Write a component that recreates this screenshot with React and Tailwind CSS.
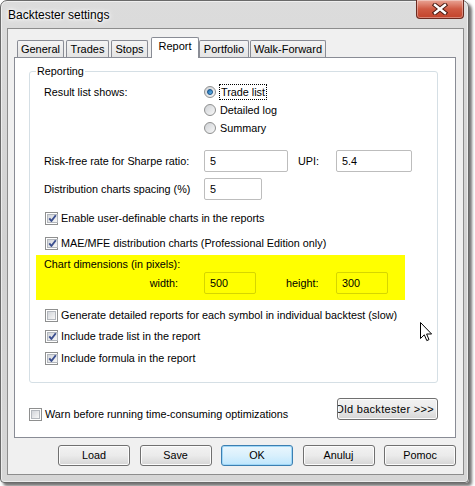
import React from "react";

function Check({ checked }) {
  return (
    <span className="w-[13px] h-[13px] shrink-0 border border-[#8e8f8f] bg-white p-[1px] flex">
      <span className="flex-1 flex items-center justify-center border border-[#b3b7bd] bg-gradient-to-br from-[#d2d5da] to-[#f7f7f7]">
        {checked && (
          <svg width="9" height="9" viewBox="0 0 9 9">
            <path d="M1.3 4.3 L3.4 7 L7.8 1.2" fill="none" stroke="#3b4f8f" strokeWidth="1.9" strokeLinejoin="round" />
          </svg>
        )}
      </span>
    </span>
  );
}

function Radio({ checked }) {
  return (
    <span className="w-[12px] h-[12px] shrink-0 rounded-full border border-[#8e8f8f] bg-gradient-to-br from-[#cfd2d6] to-[#f8f8f8] flex items-center justify-center">
      {checked && (
        <span className="w-[6px] h-[6px] rounded-full border border-[#144f86] bg-gradient-to-br from-[#1d6ab0] to-[#6cc0f0]" />
      )}
    </span>
  );
}

function Input({ value, w, yellow }) {
  return (
    <div
      className={
        "h-[22px] rounded-[2px] border flex items-center pl-[5px] " +
        w +
        (yellow ? " border-[#d6d600] bg-[#ffff00]" : " border-[#bdbdbd] bg-white")
      }
    >
      {value}
    </div>
  );
}

function CheckRow({ checked, children, className }) {
  return (
    <div className={"h-[18px] flex items-center pl-[15px] gap-[3px] " + (className || "")}>
      <Check checked={checked} />
      <span className="whitespace-nowrap">{children}</span>
    </div>
  );
}

function Tab({ label, w, ml, selected }) {
  return selected ? (
    <div
      className={
        "h-[21px] -mb-[1px] relative z-10 bg-white border border-b-0 border-[#898c95] rounded-t-[2px] flex items-start justify-center pt-[3px] " +
        w +
        " " +
        ml
      }
    >
      {label}
    </div>
  ) : (
    <div
      className={
        "h-[17px] border border-b-0 border-[#898c95] rounded-t-[2px] bg-gradient-to-b from-[#f4f4f4] to-[#e4e4e4] flex items-center justify-center " +
        w +
        " " +
        ml
      }
    >
      {label}
    </div>
  );
}

function Btn({ children, def }) {
  return (
    <div
      className={
        "w-[72px] h-[21px] rounded-[3px] border flex items-center justify-center " +
        (def
          ? "border-[#3c7fb1] bg-gradient-to-b from-[#eaf6fd] via-[#d9f0fc] to-[#bee6fd] shadow-[inset_0_0_0_1px_#9fd7f7]"
          : "border-[#707070] bg-gradient-to-b from-[#f2f2f2] via-[#ebebeb] to-[#d5d5d5] shadow-[inset_0_0_0_1px_#fcfcfc]")
      }
    >
      {children}
    </div>
  );
}

export default function App() {
  return (
    <div className="w-[475px] h-[486px] bg-white relative overflow-hidden font-['Liberation_Sans',Arial,sans-serif] text-[10.8px] text-black leading-none">
      <div className="w-[469px] h-[483px] rounded-t-[7px] rounded-b-[4px] border border-[#6a6a6a] bg-gradient-to-b from-[#dcdcdc] via-[#d2d2d2] to-[#d6d6d6] shadow-[3px_3px_3px_rgba(0,0,0,0.55),inset_0_0_0_1px_rgba(255,255,255,0.55)] flex flex-col">
        {/* title bar */}
        <div className="h-[27px] flex items-start justify-between shrink-0">
          <div className="text-[12px] ml-[7px] mt-[8px] [text-shadow:0_0_8px_#fff,0_0_5px_#fff,0_0_3px_#fff]">
            Backtester settings
          </div>
          <div className="-mt-[1px] mr-[4px] w-[48px] h-[19px] rounded-b-[4px] border border-t-0 border-[#6b2a20] bg-gradient-to-b from-[#e9a596] via-[#cf5a43] to-[#c2432b] shadow-[inset_0_0_0_1px_rgba(255,255,255,0.35)] flex items-center justify-center">
            <svg width="16" height="12" viewBox="0 0 16 12">
              <path d="M3 2 L13 10 M13 2 L3 10" stroke="#4a1a12" strokeWidth="4.4" strokeLinecap="square" />
              <path d="M3 2 L13 10 M13 2 L3 10" stroke="#ffffff" strokeWidth="2.4" strokeLinecap="square" />
            </svg>
          </div>
        </div>

        {/* client area */}
        <div className="ml-[6px] w-[457px] h-[447px] border border-[#8d8d8d] bg-[#f0f0f0] flex flex-col pl-[6px] pt-[8px]">
          {/* tabs */}
          <div className="h-[20px] flex items-end text-[11px]">
            <Tab label="General" w="w-[47px]" ml="ml-[3px]" />
            <Tab label="Trades" w="w-[43px]" ml="ml-[2px]" />
            <Tab label="Stops" w="w-[37px]" ml="ml-[2px]" />
            <Tab label="Report" w="w-[48px]" ml="ml-[3px]" selected />
            <Tab label="Portfolio" w="w-[50px]" ml="ml-0" />
            <Tab label="Walk-Forward" w="w-[76px]" ml="ml-[1px]" />
          </div>

          {/* panel */}
          <div className="w-[442px] h-[381px] border border-[#898c95] bg-white flex flex-col">
            {/* group box */}
            <div className="relative ml-[14px] mt-[13px] w-[409px] h-[312px] border border-[#d5dfe5] rounded-[3px] flex flex-col pt-[11px]">
              <span className="absolute left-[6px] -top-[7px] bg-white px-[1px] leading-[13px]">Reporting</span>

              {/* radios */}
              <div className="flex pl-[14px]">
                <div className="w-[160px] h-[18px] flex items-center">Result list shows:</div>
                <div className="flex flex-col">
                  <div className="h-[18px] flex items-center gap-[3px]">
                    <Radio checked />
                    <span className="border border-dotted border-black px-[1px] py-[2px]">Trade list</span>
                  </div>
                  <div className="h-[18px] flex items-center gap-[4px]">
                    <Radio />
                    <span>Detailed log</span>
                  </div>
                  <div className="h-[18px] flex items-center gap-[4px]">
                    <Radio />
                    <span>Summary</span>
                  </div>
                </div>
              </div>

              {/* risk-free */}
              <div className="flex items-center pl-[14px] mt-[13px]">
                <div className="w-[160px]">Risk-free rate for Sharpe ratio:</div>
                <Input value="5" w="w-[84px]" />
                <div className="ml-[10px] w-[38px]">UPI:</div>
                <Input value="5.4" w="w-[76px]" />
              </div>

              {/* distribution */}
              <div className="flex items-center pl-[14px] mt-[6px]">
                <div className="w-[160px]">Distribution charts spacing (%)</div>
                <Input value="5" w="w-[58px]" />
              </div>

              <CheckRow checked className="mt-[9px]">Enable user-definable charts in the reports</CheckRow>
              <CheckRow checked className="mt-[7px]">MAE/MFE distribution charts (Professional Edition only)</CheckRow>

              {/* yellow */}
              <div className="ml-[6px] mt-[3px] w-[369px] h-[45px] bg-[#ffff00] flex flex-col pl-[8px]">
                <div className="h-[17px] flex items-center pt-[1px]">Chart dimensions (in pixels):</div>
                <div className="flex items-center">
                  <div className="w-[160px] text-right pr-[26px]">width:</div>
                  <Input value="500" w="w-[52px]" yellow />
                  <div className="ml-[30px] w-[50px]">height:</div>
                  <Input value="300" w="w-[52px]" yellow />
                </div>
              </div>

              <CheckRow className="mt-[6px]">Generate detailed reports for each symbol in individual backtest (slow)</CheckRow>
              <CheckRow checked className="mt-[3px]">Include trade list in the report</CheckRow>
              <CheckRow checked className="mt-[4px]">Include formula in the report</CheckRow>
            </div>

            {/* warn row */}
            <div className="ml-[14px] mt-[15px] w-[409px] h-[23px] flex justify-between">
              <div className="self-end flex items-center gap-[3px]">
                <Check />
                <span>Warn before running time-consuming optimizations</span>
              </div>
              <div className="w-[101px] h-[22px] rounded-[3px] border border-[#707070] bg-gradient-to-b from-[#f2f2f2] via-[#ebebeb] to-[#d5d5d5] shadow-[inset_0_0_0_1px_#fcfcfc] flex items-center justify-end overflow-hidden whitespace-nowrap pr-[3px]">
                <span className="tracking-[0.3px] text-[11px]">Old backtester &gt;&gt;&gt;</span>
              </div>
            </div>
          </div>

          {/* buttons */}
          <div className="w-[442px] mt-[7px] flex justify-end gap-[9.5px]">
            <Btn>Load</Btn>
            <Btn>Save</Btn>
            <Btn def>OK</Btn>
            <Btn>Anuluj</Btn>
            <Btn>Pomoc</Btn>
          </div>
        </div>
      </div>

      {/* mouse cursor */}
      <svg className="absolute left-[420px] top-[322px]" width="13" height="20" viewBox="0 0 13 20">
        <path d="M0.5 0.5 L0.5 16.5 L4.3 12.8 L6.8 18.6 L9 17.6 L6.6 12 L11.6 12 Z" fill="#fff" stroke="#000" strokeWidth="1" strokeLinejoin="round" />
      </svg>
    </div>
  );
}
